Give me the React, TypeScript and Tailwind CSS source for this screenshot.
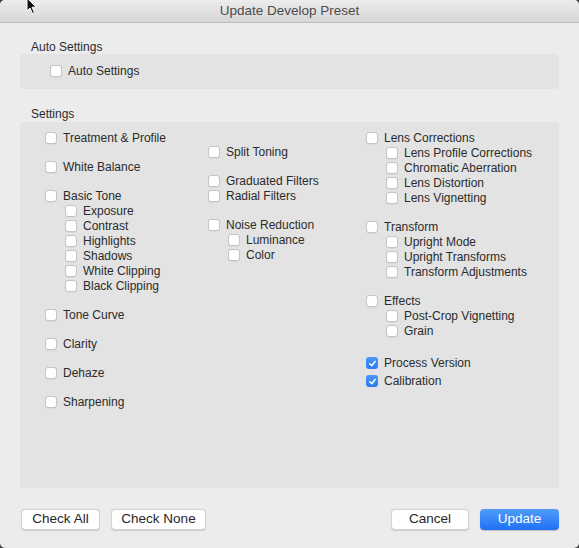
import React from 'react';

type Item = { label: string; sub?: boolean; gap?: boolean; checked?: boolean };

const col1: Item[] = [
  { label: 'Treatment & Profile' },
  { label: 'White Balance', gap: true },
  { label: 'Basic Tone', gap: true },
  { label: 'Exposure', sub: true },
  { label: 'Contrast', sub: true },
  { label: 'Highlights', sub: true },
  { label: 'Shadows', sub: true },
  { label: 'White Clipping', sub: true },
  { label: 'Black Clipping', sub: true },
  { label: 'Tone Curve', gap: true },
  { label: 'Clarity', gap: true },
  { label: 'Dehaze', gap: true },
  { label: 'Sharpening', gap: true },
];

const col2: Item[] = [
  { label: 'Split Toning', gap: true },
  { label: 'Graduated Filters', gap: true },
  { label: 'Radial Filters' },
  { label: 'Noise Reduction', gap: true },
  { label: 'Luminance', sub: true },
  { label: 'Color', sub: true },
];

const col3: Item[] = [
  { label: 'Lens Corrections' },
  { label: 'Lens Profile Corrections', sub: true },
  { label: 'Chromatic Aberration', sub: true },
  { label: 'Lens Distortion', sub: true },
  { label: 'Lens Vignetting', sub: true },
  { label: 'Transform', gap: true },
  { label: 'Upright Mode', sub: true },
  { label: 'Upright Transforms', sub: true },
  { label: 'Transform Adjustments', sub: true },
  { label: 'Effects', gap: true },
  { label: 'Post-Crop Vignetting', sub: true },
  { label: 'Grain', sub: true },
];

function Box({ checked }: { checked?: boolean }) {
  if (checked) {
    return (
      <span className="flex h-[12px] w-[12px] shrink-0 items-center justify-center rounded-[3px] bg-gradient-to-b from-[#4b97f8] to-[#2a7af5]">
        <svg width="9" height="9" viewBox="0 0 10 10">
          <path d="M2 5.3 L4.2 7.5 L8 2.5" fill="none" stroke="white" strokeWidth="1.6" strokeLinecap="round" strokeLinejoin="round" />
        </svg>
      </span>
    );
  }
  return (
    <span className="h-[12px] w-[12px] shrink-0 rounded-[3px] border border-[#c4c4c4] bg-white shadow-[0_0.5px_0.5px_rgba(0,0,0,0.08)]" />
  );
}

function Row({ item, tall }: { item: Item; tall?: boolean }) {
  return (
    <div
      className={`flex items-center gap-[6px] ${tall ? 'h-[18px]' : 'h-[15px]'} ${item.sub ? 'pl-[20px]' : ''} ${item.gap ? 'mt-[14px]' : ''}`}
    >
      <Box checked={item.checked} />
      <span className="whitespace-nowrap">{item.label}</span>
    </div>
  );
}

function Button({ children, w, primary }: { children: React.ReactNode; w: string; primary?: boolean }) {
  return (
    <button
      className={`flex h-[21px] items-center justify-center rounded-[4px] text-[13.5px] ${w} ${
        primary
          ? 'bg-gradient-to-b from-[#509cf8] to-[#1f6ff5] text-white shadow-[0_0.5px_1px_rgba(0,0,0,0.2)]'
          : 'border border-[#d3d3d3] bg-white text-[#262626] shadow-[0_0.5px_1px_rgba(0,0,0,0.15)]'
      }`}
    >
      {children}
    </button>
  );
}

export default function App() {
  return (
    <div className="relative h-[548px] w-[579px] overflow-hidden bg-[#3a3a3a] font-['Liberation_Sans',Arial,sans-serif] text-[12px] text-[#2b2b2b]">
      <div className="flex h-[548px] flex-col overflow-hidden rounded-[5px] bg-[#ececec]">
        <div className="flex h-[23px] shrink-0 items-center justify-center border-b border-[#bdbdbd] bg-gradient-to-b from-[#ececec] to-[#d6d6d6] text-[13.5px] text-[#4c4c4c]">
          Update Develop Preset
        </div>

        <div className="flex flex-1 flex-col px-[20px]">
          <div className="mt-[17px] h-[14px] pl-[11px] leading-[14px]">Auto Settings</div>
          <div className="flex h-[35px] items-center rounded-[4px] bg-[#e3e3e3] pb-[1px] pl-[30px]">
            <div className="flex items-center gap-[6px]">
              <Box />
              <span>Auto Settings</span>
            </div>
          </div>

          <div className="mt-[18px] h-[14px] pl-[11px] leading-[14px]">Settings</div>
          <div className="mt-[1px] flex h-[366px] rounded-[4px] bg-[#e3e3e3] pl-[25px] pt-[8px]">
            <div className="w-[163px]">
              {col1.map((it) => (
                <Row key={it.label} item={it} />
              ))}
            </div>
            <div className="w-[158px]">
              {col2.map((it) => (
                <Row key={it.label} item={it} />
              ))}
            </div>
            <div>
              {col3.map((it) => (
                <Row key={it.label} item={it} />
              ))}
              <div className="mt-[16px]">
                <Row item={{ label: 'Process Version', checked: true }} tall />
                <Row item={{ label: 'Calibration', checked: true }} tall />
              </div>
            </div>
          </div>

          <div className="mt-[21px] flex items-center pl-[1px]">
            <div className="flex gap-[11px]">
              <Button w="w-[79px]">Check All</Button>
              <Button w="w-[95px]">Check None</Button>
            </div>
            <div className="ml-auto flex gap-[11px]">
              <Button w="w-[78px]">Cancel</Button>
              <Button w="w-[79px]" primary>
                Update
              </Button>
            </div>
          </div>
        </div>
      </div>

      <svg className="absolute left-[26px] top-[-3px]" width="12" height="18" viewBox="0 0 12 18">
        <path d="M1 1 L1 14 L4 11 L6.5 16.5 L8.5 15.5 L6 10.2 L10.2 10.2 Z" fill="#111" stroke="white" strokeWidth="1" strokeLinejoin="round" />
      </svg>
    </div>
  );
}
